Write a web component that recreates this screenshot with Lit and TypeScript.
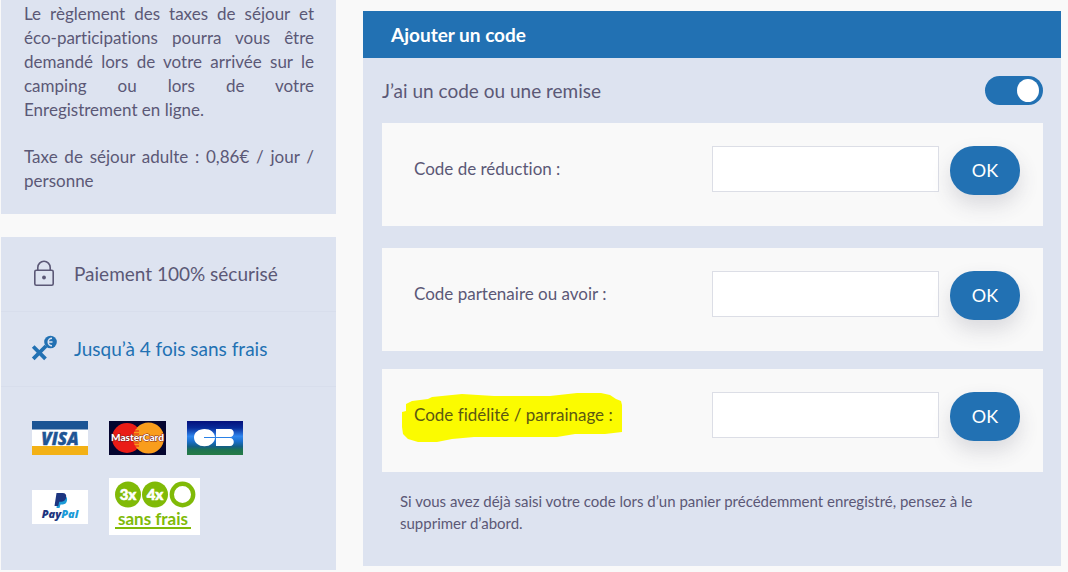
import { LitElement, html, css, svg } from "lit";
import { customElement, property, state } from "lit/decorators.js";

const baseStyles = css`
  * {
    box-sizing: border-box;
  }
  p,
  h2,
  ul {
    margin: 0;
    padding: 0;
  }
`;

@customElement("payment-logos")
class PaymentLogos extends LitElement {
  static styles = [
    baseStyles,
    css`
      :host {
        display: block;
      }
      .logos {
        display: flex;
        flex-wrap: wrap;
        align-items: center;
        gap: 23px 21px;
        max-width: 260px;
        list-style: none;
      }
      .logos li,
      .logos svg {
        display: block;
      }
      .heavy {
        font-family: "Open Sans", sans-serif;
        font-weight: 800;
      }
      .italic {
        font-style: italic;
      }
      .rounded {
        font-family: "Lato", sans-serif;
        font-weight: 900;
      }
      .bold {
        font-family: "Lato", sans-serif;
        font-weight: 700;
      }
    `,
  ];

  render() {
    return html`
      <ul class="logos">
        <li>
          <svg width="56" height="34" viewBox="0 0 56 34" role="img" aria-label="Visa">
            <rect width="56" height="34" fill="#fff" />
            <rect width="56" height="8.500" fill="#1a5494" />
            <rect y="25" width="56" height="9" fill="#f3b115" />
            <text class="heavy italic" x="28" y="23.500" font-size="17" text-anchor="middle" fill="#1f5595" stroke="#1f5595" stroke-width="0.400">VISA</text>
          </svg>
        </li>
        <li>
          <svg width="57" height="34" viewBox="0 0 57 34" role="img" aria-label="MasterCard">
            <rect width="57" height="34" fill="#04052f" />
            <circle cx="18" cy="17" r="15" fill="#ea1c16" />
            <circle cx="39.500" cy="17" r="15.500" fill="#f99d1c" />
            <path d="M28 7h-1M30 10h-5M30 13h-6M30 16h-6M30 19h-6M30 22h-6M30 25h-4" stroke="#ea1c16" stroke-width="1" />
            <text class="rounded" x="28.500" y="20" font-size="10" text-anchor="middle" fill="#fff" stroke="#7b1a18" stroke-width="1" paint-order="stroke">MasterCard</text>
          </svg>
        </li>
        <li>
          <svg width="56" height="34" viewBox="0 0 56 34" role="img" aria-label="CB">
            <defs>
              <linearGradient id="cb" x1="0" y1="0" x2="0" y2="1">
                <stop offset="0" stop-color="#05107c" />
                <stop offset="0.2" stop-color="#082a98" />
                <stop offset="0.45" stop-color="#2f86ee" />
                <stop offset="0.6" stop-color="#1a6fcc" />
                <stop offset="0.75" stop-color="#145f86" />
                <stop offset="0.85" stop-color="#1d7350" />
                <stop offset="1" stop-color="#267b45" />
              </linearGradient>
            </defs>
            <rect width="56" height="34" fill="url(#cb)" />
            <path d="M28 16H17v1h11c-.5 4.500-4.500 8.300-10.500 8.300C11.500 25.300 7 21.500 7 16.500S11.500 8 17.500 8C23.500 8 27.500 11.500 28 16z" fill="#fff" />
            <path d="M29 8h14c5 0 5 8 0 8H29zM29 17h14c5 0 5 8 0 8H29z" fill="#fff" />
          </svg>
        </li>
        <li>
          <svg width="56" height="34" viewBox="0 0 56 34" role="img" aria-label="PayPal">
            <rect width="56" height="34" fill="#fff" />
            <path d="M26 6h5.500c3 0 4 2 3.500 4.500-.6 3.200-2.700 4-5 4h-1.500L27.500 18H24.500z" fill="#1b9bd8" />
            <path d="M24.500 3h6c3 0 4.200 1.800 3.600 4.500-.7 3.300-2.800 4.200-5.300 4.200h-1.600L26.300 16h-3.800z" fill="#1d3580" />
            <text class="heavy italic" x="28" y="28" font-size="11" text-anchor="middle"><tspan fill="#1d3580">Pay</tspan><tspan fill="#1b9bd8">Pal</tspan></text>
          </svg>
        </li>
        <li>
          <svg width="91" height="57" viewBox="0 0 91 57" role="img" aria-label="3x 4x sans frais">
            <rect width="91" height="57" fill="#fff" />
            <circle cx="19" cy="16.500" r="13" fill="#80ba07" />
            <circle cx="46" cy="16.500" r="13" fill="#80ba07" />
            <circle cx="73.500" cy="16.500" r="10.700" fill="#fff" stroke="#80ba07" stroke-width="4.400" />
            <text class="rounded" x="19" y="21.500" font-size="15" text-anchor="middle" fill="#fff" stroke="#fff" stroke-width="0.600">3x</text>
            <text class="rounded" x="46" y="21.500" font-size="15" text-anchor="middle" fill="#fff" stroke="#fff" stroke-width="0.600">4x</text>
            <text class="bold" x="44" y="46.500" font-size="17" text-anchor="middle" fill="#80ba07">sans frais</text>
            <rect x="6" y="49" width="76" height="2" fill="#80ba07" />
          </svg>
        </li>
      </ul>
    `;
  }
}

@customElement("code-card")
class CodeCard extends LitElement {
  @property() label = "";
  @property() name = "";
  @property({ type: Boolean }) marked = false;

  static styles = [
    baseStyles,
    css`
      :host {
        display: block;
      }
      .card {
        display: flex;
        align-items: flex-start;
        padding: 23px 23px 31px 32px;
        background: #f9f9f9;
      }
      .label {
        flex: 1;
        position: relative;
        font-size: 17px;
        line-height: 46px;
      }
      .text {
        position: relative;
      }
      .highlighted {
        color: #5b5812;
      }
      .marker {
        position: absolute;
        left: -12px;
        top: 1px;
      }
      .field {
        flex: 0 1 227px;
        min-width: 80px;
        height: 46px;
        margin-right: 11px;
        padding: 0 12px;
        border: 1px solid #dcdee6;
        border-radius: 0;
        background: #fff;
        color: inherit;
        font: inherit;
        outline: none;
      }
      .ok {
        width: 70px;
        height: 49px;
        padding: 0 0 1px;
        border: 0;
        border-radius: 24px;
        background: #2271b3;
        box-shadow: 0 10px 20px rgba(60, 60, 90, 0.16);
        color: #fff;
        font-family: inherit;
        font-size: 18px;
        cursor: pointer;
      }
    `,
  ];

  render() {
    return html`
      <div class="card">
        <label class="label" for=${this.name}>
          ${this.marked
            ? html`<svg class="marker" width="220" height="50" viewBox="0 0 220 50" aria-hidden="true">
                ${svg`<path fill="#fbfb00" d="M0 19L4 18V11L10 8L26 6L30 4L60 1L92 3H148L175 0H199L208 2L214 6L219 8L220 12V39L203 41H173L155 44H72L50 46L35 49H16L6 46L1 41L0 34Z" />`}
              </svg>`
            : null}
          <span class=${this.marked ? "text highlighted" : "text"}>${this.label}</span>
        </label>
        <input class="field" id=${this.name} name=${this.name} type="text" />
        <button class="ok" type="button">OK</button>
      </div>
    `;
  }
}

@customElement("app-root")
class AppRoot extends LitElement {
  @state() private open = true;

  static styles = [
    baseStyles,
    css`
      :host {
        display: block;
        min-height: 100vh;
        background: #f9f9f9;
        color: #5b5876;
        font-family: "Lato", sans-serif;
        font-variant-ligatures: none;
      }
      .page {
        display: grid;
        grid-template-columns: minmax(0, 335fr) minmax(0, 698fr);
        align-items: start;
        gap: 27px;
        padding: 0 7px 0 1px;
      }
      .side {
        display: grid;
        gap: 23px;
      }
      .panel {
        background: #dde3f0;
      }
      .taxes {
        display: grid;
        gap: 23px;
        padding: 2px 22px 21px 23px;
        font-size: 17px;
        line-height: 24px;
        text-align: justify;
      }
      .row {
        display: flex;
        align-items: center;
        gap: 17px;
        height: 75px;
        padding: 0 0 2px 29px;
        border-bottom: 1px solid #d8deec;
        font-size: 19px;
      }
      .accent {
        color: #2271b3;
      }
      .logos {
        padding: 34px 31px 35px;
      }
      .codes {
        margin-top: 11px;
      }
      .title {
        padding-left: 28px;
        background: #2271b3;
        color: #fff;
        font-size: 19px;
        font-weight: 700;
        line-height: 47px;
      }
      .body {
        padding: 0 18px 32px 19px;
      }
      .switch-row {
        display: flex;
        align-items: center;
        justify-content: space-between;
        height: 65px;
        font-size: 19px;
      }
      .switch {
        display: flex;
        align-items: center;
        appearance: none;
        width: 58px;
        height: 29px;
        margin: 0;
        padding: 0 4px;
        border-radius: 15px;
        background: #a9b4c8;
        cursor: pointer;
      }
      .switch::before {
        content: "";
        width: 22px;
        height: 23px;
        border-radius: 50%;
        background: #fff;
      }
      .switch:checked {
        justify-content: flex-end;
        background: #2271b3;
      }
      .spaced {
        margin-bottom: 22px;
      }
      .close {
        margin-bottom: 18px;
      }
      .note {
        padding: 0 18px;
        font-size: 15px;
        line-height: 22px;
      }
    `,
  ];

  private toggle(e: Event) {
    this.open = (e.target as HTMLInputElement).checked;
  }

  render() {
    return html`
      <main class="page">
        <aside class="side">
          <section class="panel taxes">
            <p>
              Le règlement des taxes de séjour et éco-participations pourra vous être demandé lors de
              votre arrivée sur le camping ou lors de votre Enregistrement en ligne.
            </p>
            <p>Taxe de séjour adulte : 0,86€ / jour / personne</p>
          </section>
          <section class="panel">
            <div class="row">
              <svg width="27" height="27" viewBox="0 0 27 27" fill="none" stroke="#5b5876" stroke-width="1.600" aria-hidden="true">
                <rect x="4.800" y="10.300" width="18.400" height="14.900" rx="1.500" />
                <path d="M7.800 10.300V7.500a6.200 6.200 0 0 1 12.400 0v2.800" />
                <circle cx="14" cy="17.500" r="1.900" fill="#5b5876" stroke="none" />
              </svg>
              <span>Paiement 100% sécurisé</span>
            </div>
            <div class="row accent">
              <svg width="27" height="27" viewBox="0 0 27 27" fill="none" aria-hidden="true">
                <path d="M3.200 11.500L15.500 23.800M3.200 23.800L16 11" stroke="#2271b3" stroke-width="3.800" />
                <circle cx="20.500" cy="7" r="6.300" fill="#2271b3" />
                <path d="M22 3.200a3.800 3.800 0 1 0 0 7.600M18 7h4.500" stroke="#dde3f0" stroke-width="1.500" />
              </svg>
              <span>Jusqu’à 4 fois sans frais</span>
            </div>
            <payment-logos class="logos"></payment-logos>
          </section>
        </aside>

        <section class="panel codes">
          <h2 class="title">Ajouter un code</h2>
          <div class="body">
            <div class="switch-row">
              <label for="has-code">J’ai un code ou une remise</label>
              <input class="switch" id="has-code" type="checkbox" role="switch" .checked=${this.open} @change=${this.toggle} />
            </div>
            ${this.open
              ? html`
                  <code-card class="spaced" name="reduction" label="Code de réduction :"></code-card>
                  <code-card class="close" name="partner" label="Code partenaire ou avoir :"></code-card>
                  <code-card class="close" name="loyalty" label="Code fidélité / parrainage :" marked></code-card>
                `
              : null}
            <p class="note">
              Si vous avez déjà saisi votre code lors d’un panier précédemment enregistré, pensez à le
              supprimer d’abord.
            </p>
          </div>
        </section>
      </main>
    `;
  }
}
